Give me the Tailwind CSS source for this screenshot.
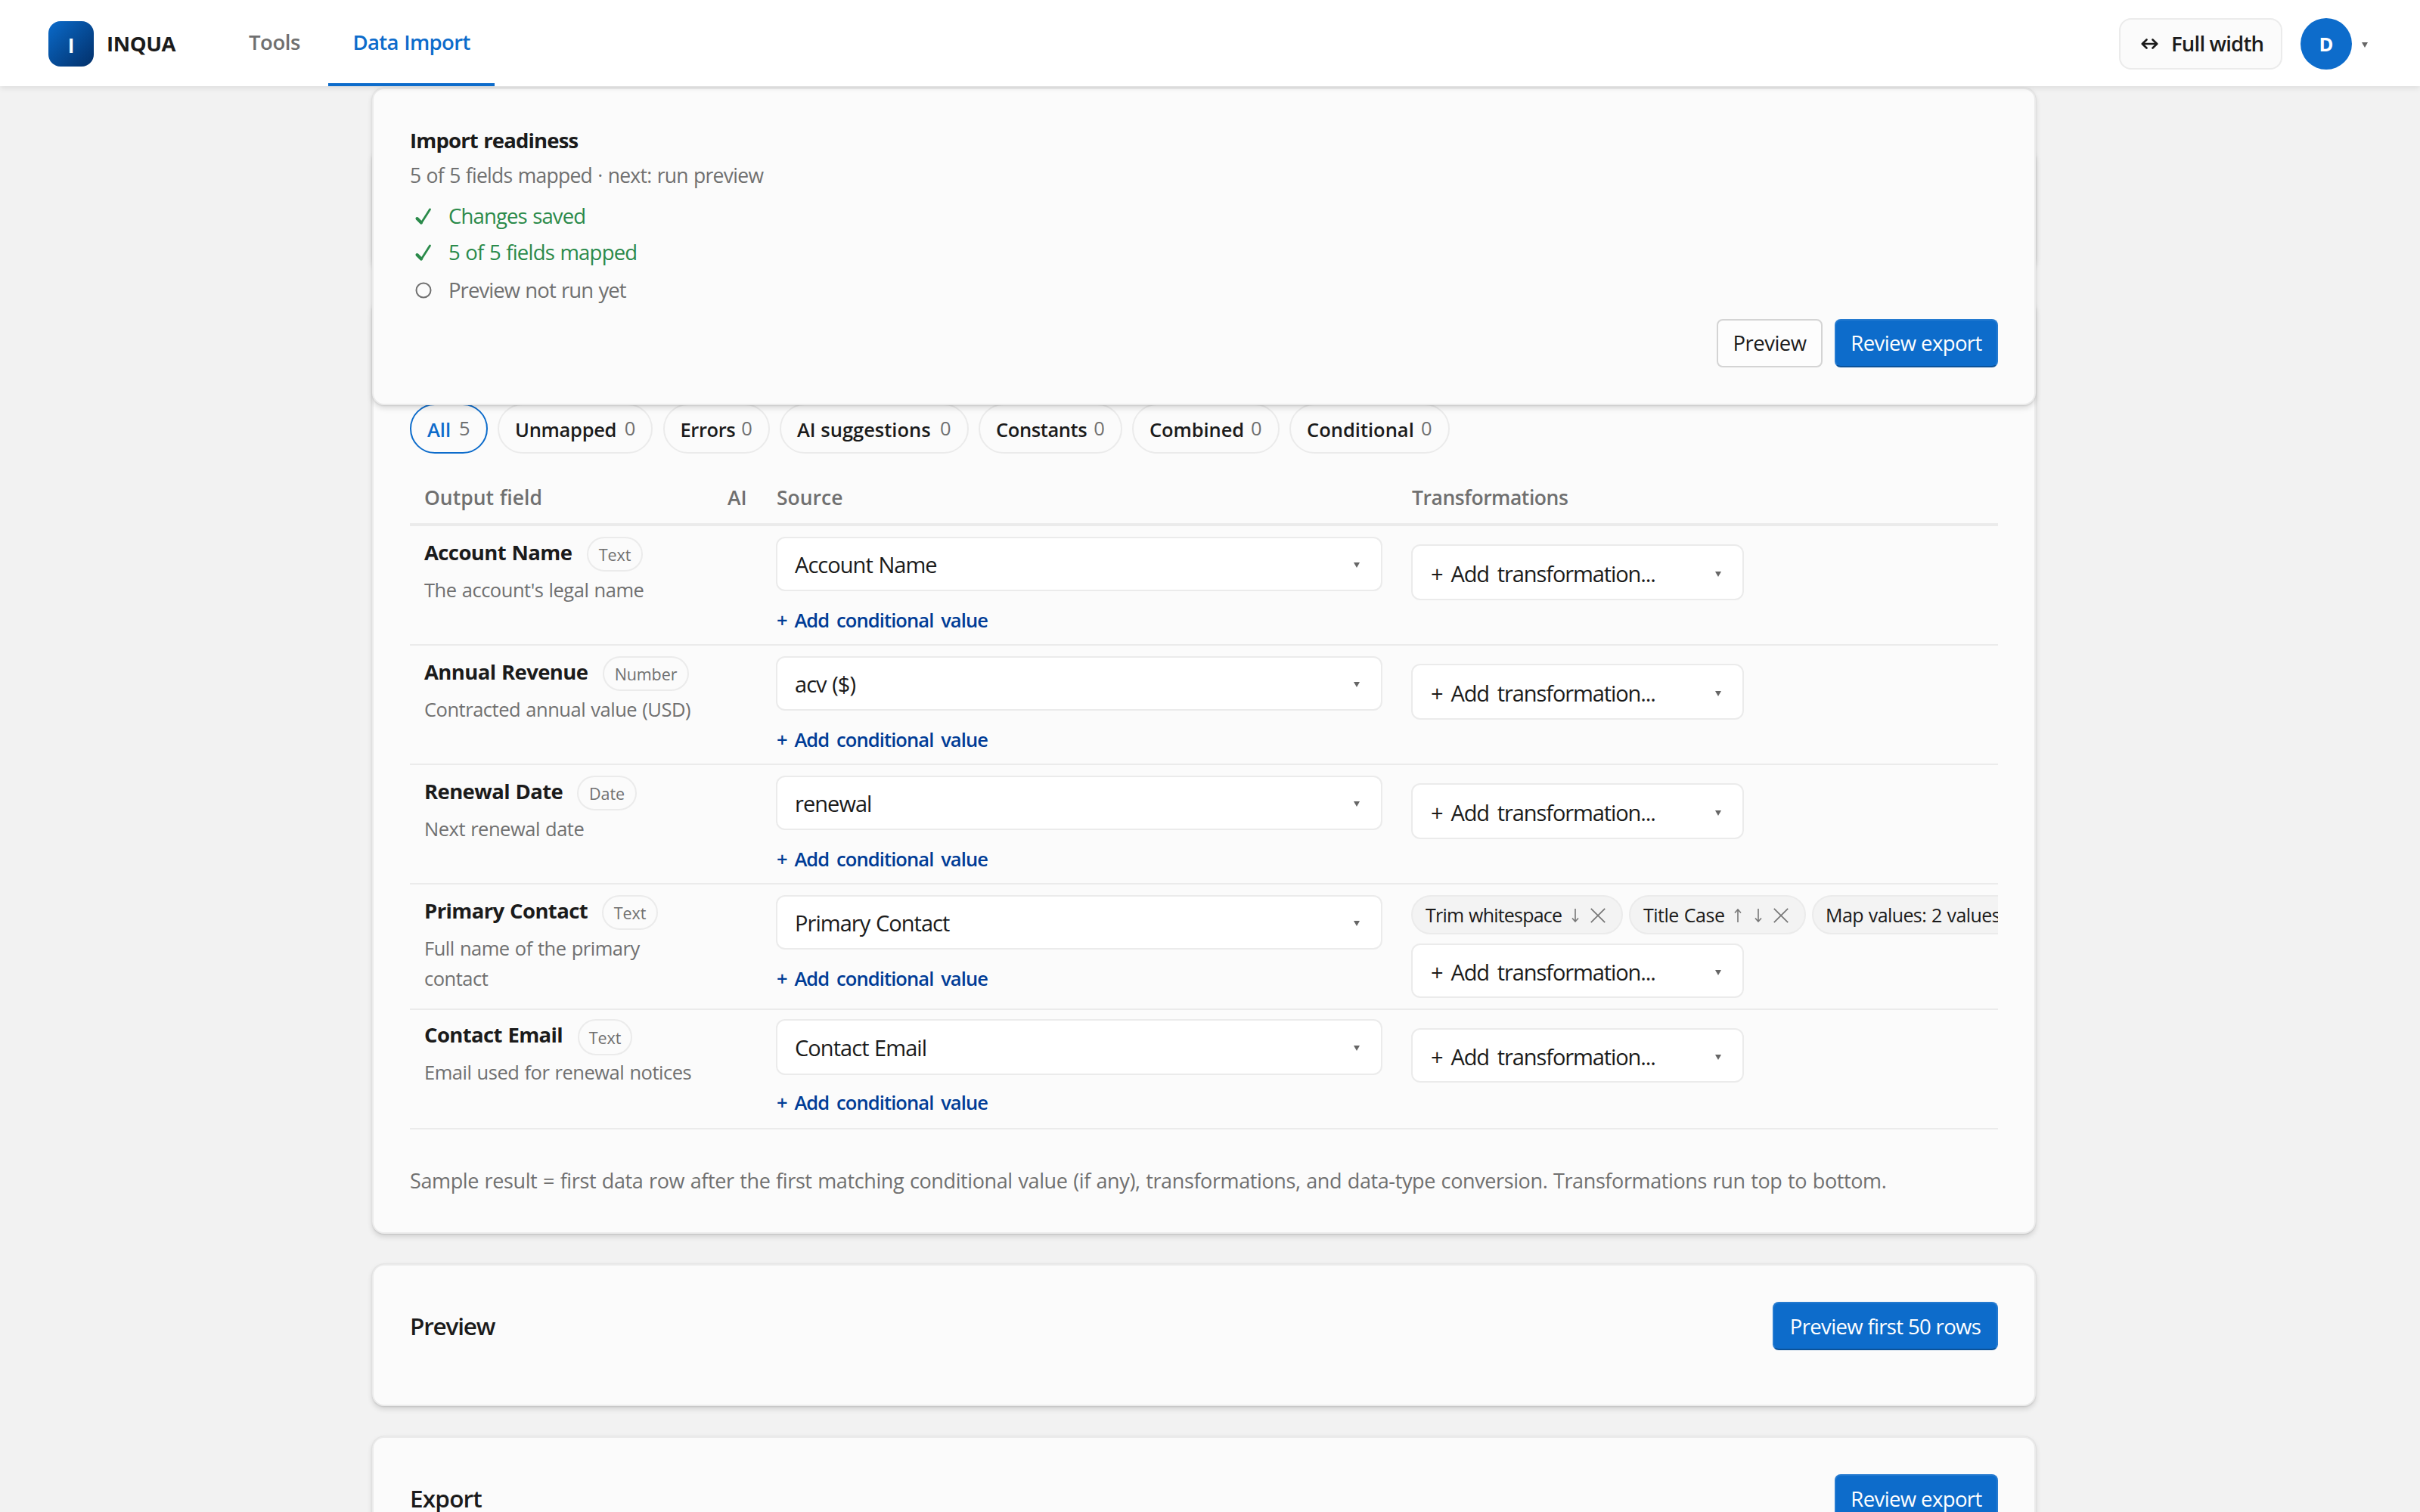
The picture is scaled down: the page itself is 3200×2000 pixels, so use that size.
<!DOCTYPE html>
<html lang="en">
<head>
<meta charset="utf-8">
<title>INQUA – Data Import</title>
<script src="https://cdn.jsdelivr.net/npm/@tailwindcss/browser@4"></script>
</head>
<body class="relative h-[2000px] w-[3200px] overflow-hidden bg-[#f2f2f2] font-['Open_Sans',sans-serif] text-[#1b1b1b] [word-spacing:1px]">

<header class="relative z-20 flex h-[114px] items-center bg-white px-16 shadow-[0_2px_8px_rgba(0,0,0,0.1)]">
  <div class="flex w-[234px] items-center gap-4 pt-0.5">
    <div class="flex size-[60px] items-center justify-center rounded-2xl bg-linear-135 from-[#0b6bcb] to-[#03306a] pt-1 text-[26px] leading-none font-bold text-white">I</div>
    <span class="pl-px text-[27.5px] leading-10 font-bold tracking-[-0.4px]">INQUA</span>
  </div>
  <nav class="flex h-full gap-1 text-[27.5px] font-semibold">
    <a class="flex w-[132px] items-center justify-center border-b-4 border-transparent pt-0.5 pr-0.5 tracking-[-0.45px] text-[#707070]">Tools</a>
    <a class="flex w-[220px] items-center justify-center border-b-4 border-[#0d6ccb] pt-0.5 tracking-[-0.65px] text-[#0d6ccb]">Data Import</a>
  </nav>
  <div class="ml-auto flex items-center pt-0.5">
    <button class="flex h-[68px] w-[216px] items-center rounded-2xl border-2 border-[#ebebeb] bg-[#fbfbfb] pl-[27px] text-[27.5px] font-semibold tracking-[-0.8px]">
      <svg class="mr-4 h-4 w-6" viewBox="0 0 24 16" fill="none" stroke="#1b1b1b" stroke-width="2.6" stroke-linecap="round" stroke-linejoin="round"><path d="M2 8H21M7.5 2.5 1.8 8l5.7 5.5M15.500 2.500 21.200 8l-5.700 5.500"/></svg>
      <span>Full width</span>
    </button>
    <div class="ml-6 flex size-[68px] items-center justify-center rounded-full bg-[#0d6ccb] text-[25.5px] font-bold text-white">D</div>
    <svg class="mt-0.5 mr-[5px] ml-[13px] h-[7px] w-2" viewBox="0 0 8 7" fill="#666"><path d="M0 0h8L4 7z"/></svg>
  </div>
</header>

<section class="absolute top-[116px] left-[492px] z-10 flex h-[420px] w-[2200px] flex-col rounded-2xl border-2 border-[#ebebeb] bg-[#fbfbfb] px-12 pt-[49px] text-[27.5px] shadow-[0_3.200px_7.200px_rgba(0,0,0,0.13),0_0.600px_1.800px_rgba(0,0,0,0.11)]">
  <h2 class="leading-[38px] font-bold tracking-[-0.85px]">Import readiness</h2>
  <p class="mt-2 text-[26.5px] leading-[38px] tracking-[-0.72px] text-[#707070]">5 of 5 fields mapped · next: run preview</p>
  <ul class="mt-[15px] leading-10">
    <li class="flex items-center text-[#2a8a4a]"><svg class="mr-[21px] ml-1.5 h-6 w-6" viewBox="0 0 24 24" fill="none" stroke="currentColor" stroke-linecap="round" stroke-linejoin="round"><path d="M3.500 15 9 21 20.500 3" stroke-width="2.800"/><path d="M3.500 15 9 20.500" stroke-width="4"/></svg><span class="tracking-[-0.85px]">Changes saved</span></li>
    <li class="mt-2 flex items-center text-[#2a8a4a]"><svg class="mr-[21px] ml-1.5 h-6 w-6" viewBox="0 0 24 24" fill="none" stroke="currentColor" stroke-linecap="round" stroke-linejoin="round"><path d="M3.500 15 9 21 20.500 3" stroke-width="2.800"/><path d="M3.500 15 9 20.500" stroke-width="4"/></svg><span class="tracking-[-0.78px]">5 of 5 fields mapped</span></li>
    <li class="mt-2.5 flex items-center text-[#707070]"><svg class="mr-[21px] ml-1.5 h-6 w-6" viewBox="0 0 24 24" fill="none" stroke="currentColor" stroke-width="2"><circle cx="12" cy="12" r="9.500"/></svg><span class="tracking-[-0.93px]">Preview not run yet</span></li>
  </ul>
  <div class="mt-[18px] flex justify-end gap-4">
    <button class="h-16 w-[140px] rounded-lg border-2 border-[#d4d4d4] bg-[#fdfdfd] tracking-[-0.5px]">Preview</button>
    <button class="h-16 w-[216px] rounded-lg border-2 border-[#247ad0] border-b-[#0b5299] bg-[#0d6ccb] tracking-[-0.6px] text-white">Review export</button>
  </div>
</section>

<main class="mx-auto flex w-[2200px] -translate-x-2 flex-col gap-10 pt-[82px]">
  <section class="h-40 shrink-0 rounded-2xl border-2 border-[#ebebeb] bg-[#fbfbfb] shadow-[0_3.200px_7.200px_rgba(0,0,0,0.13),0_0.600px_1.800px_rgba(0,0,0,0.11)]"></section>

  <section class="h-[1236px] shrink-0 rounded-2xl border-2 border-[#ebebeb] bg-[#fbfbfb] px-12 pt-[136px] shadow-[0_3.200px_7.200px_rgba(0,0,0,0.13),0_0.600px_1.800px_rgba(0,0,0,0.11)]">
    <div id="filters" class="flex h-[66px] gap-[13.500px] text-[25.5px] font-semibold"></div>
    <div class="mt-[22px] grid h-[74px] grid-cols-[400px_64px_840px_1fr] items-center border-b-4 border-[#ebebeb] pt-[3px] text-[26.5px] font-semibold text-[#707070]">
      <div class="px-[19px]">Output field</div>
      <div class="px-5">AI</div>
      <div class="px-[21px]">Source</div>
      <div class="px-[21px] tracking-[-0.45px]">Transformations</div>
    </div>
    <div id="rows"></div>
    <p class="mt-12 text-[27px] leading-10 tracking-[-0.386px] whitespace-nowrap text-[#707070]">Sample result = first data row after the first matching conditional value (if any), transformations, and data-type conversion. Transformations run top to bottom.</p>
  </section>

  <section class="flex h-[188px] shrink-0 items-start justify-between rounded-2xl border-2 border-[#ebebeb] bg-[#fbfbfb] p-12 shadow-[0_3.200px_7.200px_rgba(0,0,0,0.13),0_0.600px_1.800px_rgba(0,0,0,0.11)]">
    <h2 class="text-[31.5px] leading-16 font-semibold tracking-[-1.2px]">Preview</h2>
    <button class="h-16 w-[298px] rounded-lg border-2 border-[#247ad0] border-b-[#0b5299] bg-[#0d6ccb] pt-px text-[27.5px] tracking-[-0.65px] text-white">Preview first 50 rows</button>
  </section>

  <section class="flex h-[188px] shrink-0 items-start justify-between rounded-2xl border-2 border-[#ebebeb] bg-[#fbfbfb] p-12 shadow-[0_3.200px_7.200px_rgba(0,0,0,0.13),0_0.600px_1.800px_rgba(0,0,0,0.11)]">
    <h2 class="text-[31.5px] leading-16 font-semibold tracking-[-0.8px]">Export</h2>
    <button class="h-16 w-[216px] rounded-lg border-2 border-[#247ad0] border-b-[#0b5299] bg-[#0d6ccb] pt-px text-[27.5px] tracking-[-0.6px] text-white">Review export</button>
  </section>
</main>

<script>
const filters = [
  ['All', 5, 'w-[102.500px] border-[#0d6ccb] text-[#0d6ccb]'],
  ['Unmapped', 0, 'w-[205px] border-[#ebebeb] tracking-[-0.3px]'],
  ['Errors', 0, 'w-[141px] border-[#ebebeb] tracking-[-0.4px]'],
  ['AI suggestions', 0, 'w-[249.500px] border-[#ebebeb]'],
  ['Constants', 0, 'w-[189.500px] border-[#ebebeb] tracking-[-0.4px]'],
  ['Combined', 0, 'w-[194.500px] border-[#ebebeb] tracking-[-0.1px]'],
  ['Conditional', 0, 'w-[211.500px] border-[#ebebeb]'],
];
document.getElementById('filters').innerHTML = filters.map(([label, n, cls]) => `
  <button class="flex shrink-0 items-center justify-between rounded-full border-2 pt-0.5 pr-[21px] pl-[21px] ${cls}"><span>${label}</span><span class="-mt-1 font-medium text-[#707070]">${n}</span></button>`).join('');

const caret = '<svg class="mt-0.5 h-[7px] w-2" viewBox="0 0 8 7" fill="#666"><path d="M0 0h8L4 7z"/></svg>';
const down = '<svg class="h-[18px] w-3 shrink-0" viewBox="0 0 12 18" fill="none" stroke="#777" stroke-width="1.600"><path d="M6 0v17M2 12.500l4 4.500 4-4.500"/></svg>';
const up = '<svg class="h-[18px] w-3 shrink-0" viewBox="0 0 12 18" fill="none" stroke="#777" stroke-width="1.600"><path d="M6 18V1M2 5.500 6 1l4 4.500"/></svg>';
const close = '<svg class="ml-[14px] size-5 shrink-0" viewBox="0 0 20 20" fill="none" stroke="#777" stroke-width="1.700"><path d="M.8.8l18.400 18.400M19.200.8.8 19.200"/></svg>';

const chips = `
  <div class="mb-3 flex h-[52px] gap-2 text-[25px] whitespace-nowrap">
    <div class="flex w-[280px] shrink-0 items-center rounded-full border-2 border-[#ebebeb] bg-[#f3f3f3] pt-px pl-[17px]"><span class="w-48 tracking-[-0.78px]">Trim whitespace</span>${down}${close}</div>
    <div class="flex w-[234px] shrink-0 items-center rounded-full border-2 border-[#ebebeb] bg-[#f3f3f3] pt-px pl-[17px]"><span class="w-[119px] tracking-[-0.5px]">Title Case</span>${up}<span class="w-[15px]"></span>${down}${close}</div>
    <div class="flex w-[380px] shrink-0 items-center rounded-full border-2 border-[#ebebeb] bg-[#f3f3f3] pt-px pl-4"><span class="tracking-[-0.6px]">Map values: 2 values</span></div>
  </div>`;

const base = { row: 'h-[158px]', pad: 'pt-[14px]', nameH: 'h-[46px]', descM: 'mt-1', selH: 'h-[72px]', linkM: 'mt-[18px]', tPad: 'pt-6', tH: 'h-[74px]', chips: '' };
const rows = [
  { name: 'Account Name', nameW: 'w-[215px]', type: 'Text', typeW: 'w-[74px]', desc: "The account's legal name", src: 'Account Name' },
  { name: 'Annual Revenue', nameW: 'w-[236px]', type: 'Number', typeW: 'w-[114px]', desc: 'Contracted annual value (USD)', src: 'acv ($)' },
  { name: 'Renewal Date', nameW: 'w-[202px]', type: 'Date', typeW: 'w-[79px]', desc: 'Next renewal date', src: 'renewal' },
  { name: 'Primary Contact', nameW: 'w-[235px]', type: 'Text', typeW: 'w-[74px]', desc: 'Full name of the primary<br>contact', src: 'Primary Contact', row: 'h-[166px]', tPad: 'pt-[14px]', tH: 'h-[72px]', chips },
  { name: 'Contact Email', nameW: 'w-[203px]', type: 'Text', typeW: 'w-[72px]', desc: 'Email used for renewal notices', src: 'Contact Email', pad: 'pt-3', nameH: 'h-12', descM: 'mt-0.5', selH: 'h-[74px]', linkM: 'mt-4', tH: 'h-[72px]' },
].map(r => ({ ...base, ...r }));

document.getElementById('rows').innerHTML = rows.map(r => `
  <div class="grid grid-cols-[400px_64px_840px_1fr] border-b-2 border-[#ebebeb] ${r.row}">
    <div class="pl-[19px] whitespace-nowrap ${r.pad}">
      <div class="flex items-start ${r.nameH}">
        <span class="shrink-0 pt-px text-[27.5px] leading-10 font-bold tracking-[-0.62px] ${r.nameW}">${r.name}</span>
        <span class="flex h-full items-center justify-center rounded-full border-2 border-[#ebebeb] pt-0.5 text-[21.5px] tracking-[-0.1px] text-[#707070] ${r.typeW}">${r.type}</span>
      </div>
      <p class="text-[25.5px] leading-10 tracking-[-0.48px] text-[#707070] ${r.descM}">${r.desc}</p>
    </div>
    <div></div>
    <div class="pl-5 ${r.pad}">
      <div class="flex w-[802px] items-center justify-between rounded-xl border-2 border-[#ebebeb] bg-white pt-px pr-7 pl-[23px] text-[29px] tracking-[-0.95px] ${r.selH}"><span>${r.src}</span>${caret}</div>
      <a class="block pl-px text-[25.5px] leading-10 font-semibold tracking-[-0.9px] text-[#003c96] [word-spacing:4px] ${r.linkM}">+ Add conditional value</a>
    </div>
    <div class="min-w-0 overflow-hidden pl-5 ${r.tPad}">
      ${r.chips}
      <div class="flex w-[440px] items-center justify-between rounded-xl border-2 border-[#ebebeb] bg-white pt-[3px] pr-7 pl-6 text-[29px] tracking-[-1.1px] [word-spacing:4.5px] ${r.tH}"><span>+ Add transformation...</span>${caret}</div>
    </div>
  </div>`).join('');
</script>
</body>
</html>
